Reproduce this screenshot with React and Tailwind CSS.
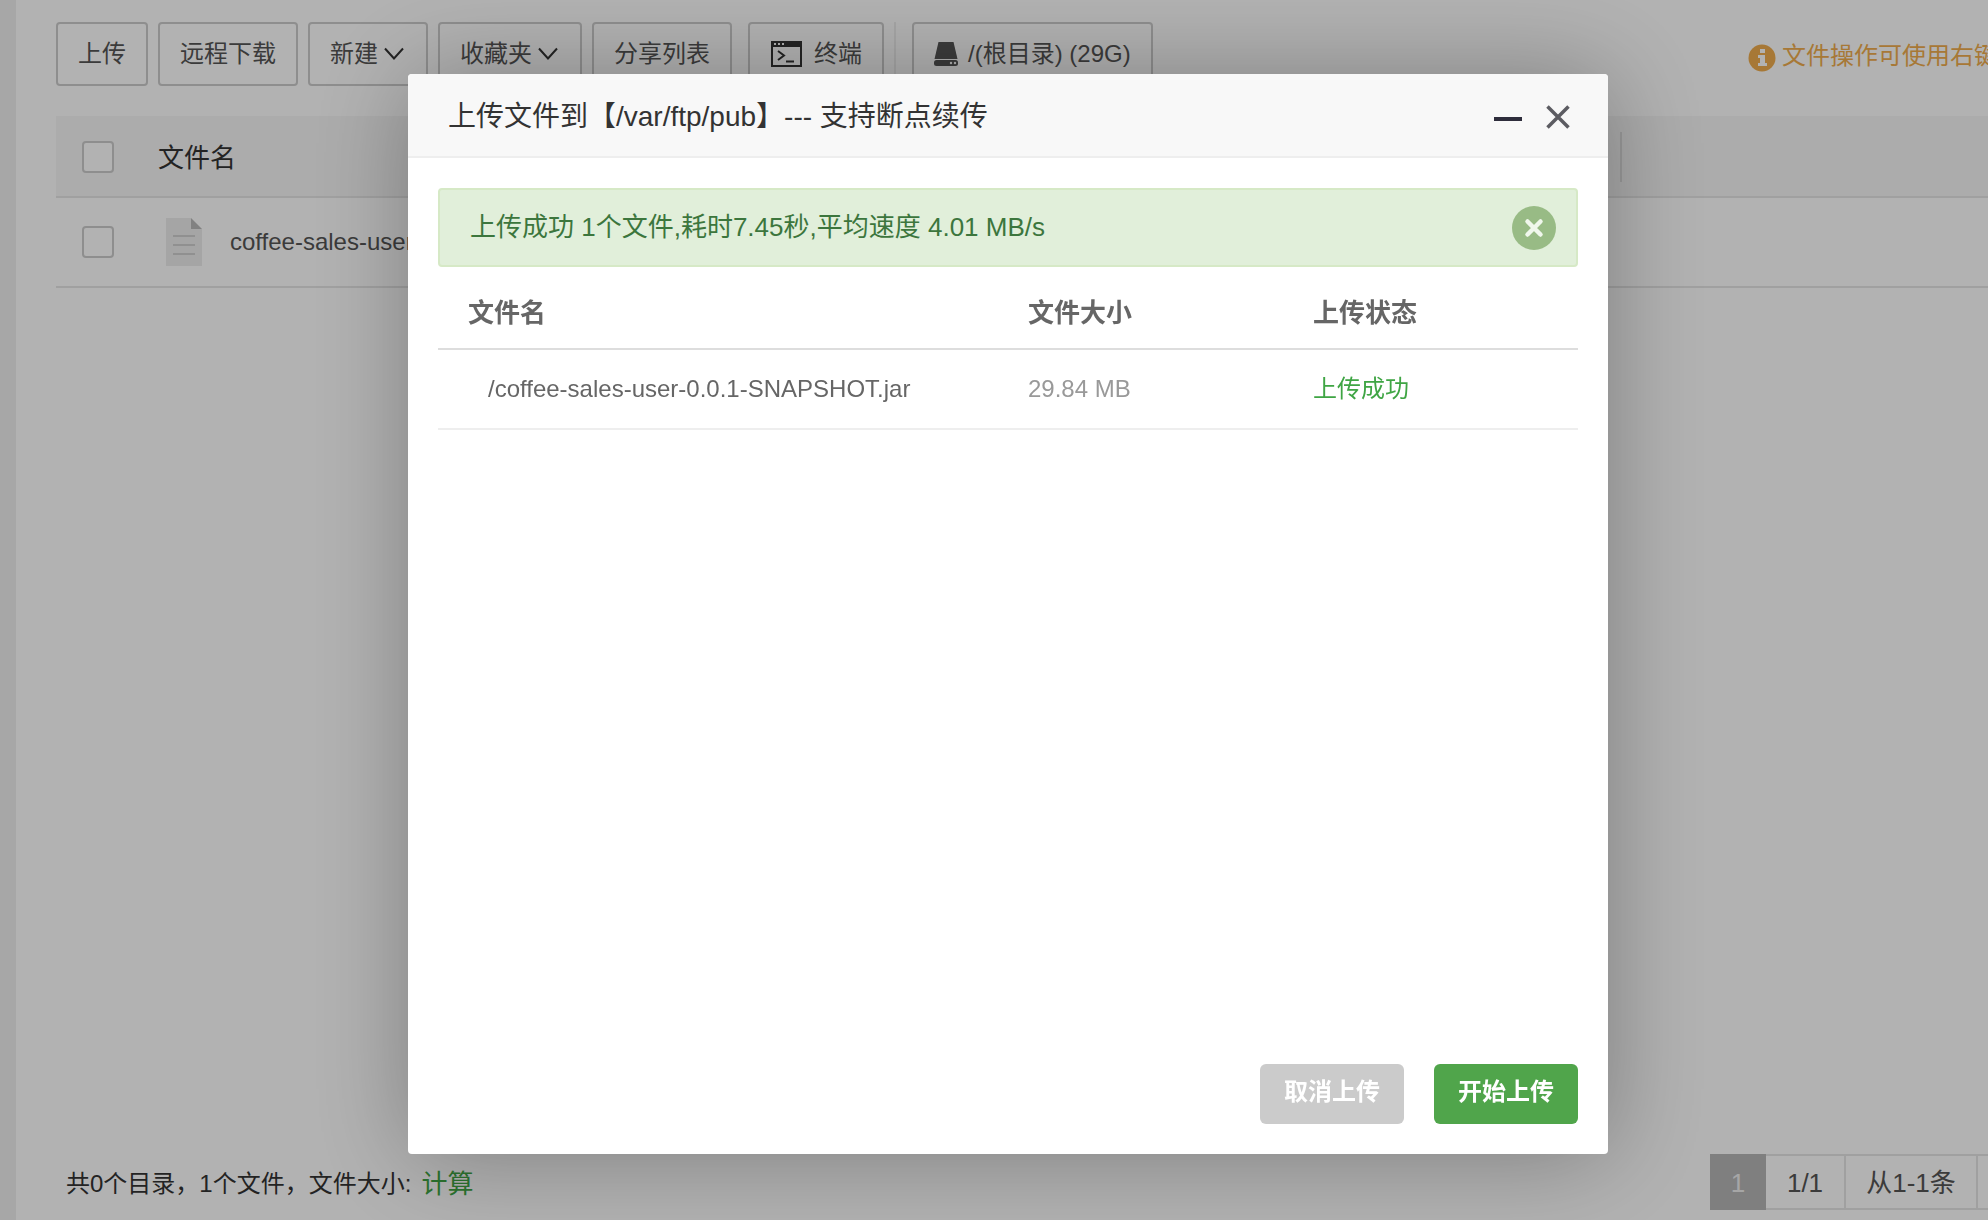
import React, { useState } from 'react';

const files = [{ name: 'coffee-sales-user-0.0.1-SNAPSHOT.jar', size: '29.84 MB', status: '上传成功' }];

const toolBtn = 'h-16 px-5 border-2 border-[#ccc] rounded bg-white text-[#555] flex items-center shrink-0 whitespace-nowrap';
const checkbox = 'appearance-none block w-8 h-8 border-2 border-[#ccc] rounded bg-white';

function Chevron() {
  return (
    <svg className="w-5 h-5 ml-1.5 mr-0.5" viewBox="0 0 20 20" fill="none" stroke="#333" strokeWidth="2">
      <path d="M1 4.500l9 10 9-10" />
    </svg>
  );
}

function TerminalIcon() {
  return (
    <svg className="w-8 h-7 mr-3" viewBox="0 0 32 28" fill="none" stroke="#333" strokeWidth="2">
      <rect x="2" y="2" width="29" height="24" />
      <path d="M1 1h31v6H1z" fill="#333" stroke="none" />
      <path d="M4 4h2M8 4h2M12 4h2" stroke="#fff" />
      <path d="M8 11l6 4.500-6 4.500M16 21.500h8" />
    </svg>
  );
}

function DiskIcon() {
  return (
    <svg className="w-6 h-6 mr-2.5" viewBox="0 0 24 24" fill="#555">
      <path d="M4.500 0h15l4 17H.5z" />
      <rect y="18" width="24" height="6" rx="2.500" />
      <circle cx="17" cy="21" r="1.200" fill="#fff" />
      <circle cx="21" cy="21" r="1.200" fill="#fff" />
    </svg>
  );
}

function FileIcon() {
  return (
    <svg className="w-9 h-12" viewBox="0 0 36 48">
      <path d="M0 0h25v11h11v37H0z" fill="#ececec" />
      <path d="M25 0l11 11H25z" fill="#b9b9b9" />
      <path d="M7 18h22M7 27h22M7 36h22" stroke="#cfcfcf" strokeWidth="2" />
    </svg>
  );
}

function InfoIcon() {
  return (
    <svg className="w-7 h-7 mt-1 mr-1.5 shrink-0" viewBox="0 0 28 28">
      <circle cx="14" cy="14" r="13.500" fill="#f0ad4e" />
      <path d="M12 5h5v4h-5zM10 11h7v8h2v3h-9v-3h2v-5h-2z" fill="#fff" />
    </svg>
  );
}

function Toolbar() {
  return (
    <div className="flex items-center pt-[22px] text-[24px]">
      <div className="flex gap-2.5">
        <button className={toolBtn}>上传</button>
        <button className={toolBtn}>远程下载</button>
        <button className={toolBtn}>新建<Chevron /></button>
        <button className={toolBtn}>收藏夹<Chevron /></button>
        <button className={toolBtn}>分享列表</button>
      </div>
      <div className="flex items-center ml-4 pr-2.5 mr-4 border-r-2 border-[#eee]">
        <button className={toolBtn}><TerminalIcon />终端</button>
      </div>
      <button className={toolBtn}><DiskIcon />/(根目录) (29G)</button>
      <div className="flex items-center ml-auto w-[240px] shrink-0 pt-1 whitespace-nowrap text-[#f0ad4e]">
        <InfoIcon />
        <span>文件操作可使用右键</span>
      </div>
    </div>
  );
}

function FileTable() {
  return (
    <table className="w-full mt-[30px] table-fixed border-collapse text-left">
      <thead>
        <tr className="h-[81px] bg-[#f6f6f6] border-b-2 border-[#e6e6e6] text-[26px] text-[#333]">
          <th className="w-[102px] pl-[26px] pt-0.5">
            <input type="checkbox" aria-label="全选" className={checkbox} />
          </th>
          <th className="pt-1 font-normal">文件名</th>
          <th className="w-[368px] pt-0.5">
            <div className="h-[50px] border-l-2 border-[#ddd]" />
          </th>
        </tr>
      </thead>
      <tbody>
        {files.map((f) => (
          <tr key={f.name} className="h-[90px] border-b-2 border-[#e6e6e6] text-[24px] text-[#555]">
            <td className="pl-[26px]">
              <input type="checkbox" aria-label={f.name} className={checkbox} />
            </td>
            <td>
              <div className="flex items-center pl-2 gap-7">
                <FileIcon />
                <span>{f.name}</span>
              </div>
            </td>
            <td />
          </tr>
        ))}
      </tbody>
    </table>
  );
}

function Footer() {
  return (
    <footer className="flex items-center justify-between mt-auto mb-2.5 pl-2.5 text-[24px] text-[#333]">
      <div className="flex items-center pt-1">
        共0个目录，1个文件，文件大小:
        <a href="#" className="ml-2.5 text-[26px] text-[#3fa544]">计算</a>
      </div>
      <div className="flex h-14 text-[26px] text-[#555]">
        <span className="w-14 pt-0.5 flex items-center justify-center bg-[#b6b6b6] text-[#eee]">1</span>
        <span className="w-20 pt-0.5 flex items-center justify-center border-2 border-l-0 border-[#e6e6e6]">1/1</span>
        <span className="w-[132px] pt-0.5 flex items-center justify-center border-2 border-l-0 border-[#e6e6e6]">从1-1条</span>
        <span className="w-2.5 border-y-2 border-[#e6e6e6]" />
      </div>
    </footer>
  );
}

function UploadDialog({ onClose }) {
  const [showTip, setShowTip] = useState(true);

  return (
    <div role="dialog" aria-label="上传文件" className="w-[1200px] h-[1080px] flex flex-col rounded bg-white shadow-[2px_2px_100px_rgba(0,0,0,0.3)]">
      {/* Title bar */}
      <div className="h-[84px] shrink-0 flex items-center px-[38px] pt-1 rounded-t bg-[#f8f8f8] border-b-2 border-[#eee]">
        <h2 className="pl-0.5 text-[28px] text-[#333]">上传文件到【/var/ftp/pub】--- 支持断点续传</h2>
        <div className="ml-auto flex items-center gap-6">
          <button aria-label="最小化" className="w-7 h-6 flex items-center">
            <span className="w-7 h-1 mt-1 bg-[#2e2d3c]" />
          </button>
          <button aria-label="关闭" onClick={onClose}>
            <svg className="w-6 h-6" viewBox="0 0 24 24" stroke="#5c5c62" strokeWidth="3.500">
              <path d="M1.500 1.500l21 21M22.500 1.500l-21 21" />
            </svg>
          </button>
        </div>
      </div>

      {/* Body */}
      <div className="flex-1 px-[30px] pt-[30px]">
        {showTip && (
          <div className="h-[79px] flex items-center justify-between pl-[30px] pr-5 border-2 border-[#d6e9c6] rounded bg-[#e1efda] text-[26px] text-[#3c763d]">
            <span>上传成功 1个文件,耗时7.45秒,平均速度 4.01 MB/s</span>
            <button aria-label="关闭提示" onClick={() => setShowTip(false)}>
              <svg className="w-11 h-11" viewBox="0 0 44 44">
                <circle cx="22" cy="22" r="22" fill="#98bb85" />
                <path d="M15.500 15.500l13 13M28.500 15.500l-13 13" stroke="#f0f7ec" strokeWidth="4.500" strokeLinecap="round" />
              </svg>
            </button>
          </div>
        )}
        <table className="w-full table-fixed border-collapse text-left">
          <thead>
            <tr className="h-[82px] border-b-2 border-[#ddd] text-[26px] text-[#666]">
              <th className="w-[560px] pl-[30px] pt-3">文件名</th>
              <th className="w-[285px] pl-[30px] pt-3">文件大小</th>
              <th className="pl-[30px] pt-3">上传状态</th>
            </tr>
          </thead>
          <tbody>
            {files.map((f) => (
              <tr key={f.name} className="h-20 border-b-2 border-[#eee] text-[24px] text-[#666]">
                <td className="pl-[50px]">/{f.name}</td>
                <td className="pl-[30px] text-[#999]">{f.size}</td>
                <td className="pl-[30px] text-[#3fa544]">{f.status}</td>
              </tr>
            ))}
          </tbody>
        </table>
      </div>

      {/* Actions */}
      <div className="flex justify-end gap-[30px] p-[30px] text-[24px] font-bold text-white">
        <button className="w-36 h-[60px] pb-1 rounded-md bg-[#cbcbcb]">取消上传</button>
        <button className="w-36 h-[60px] pb-1 rounded-md bg-[#50a54b]">开始上传</button>
      </div>
    </div>
  );
}

function App() {
  const [open, setOpen] = useState(true);

  return (
    <div className="min-h-screen flex overflow-hidden bg-[#f0f0f0] font-['Liberation_Sans','Noto_Sans_CJK_SC',sans-serif]">
      <main className="flex-1 min-w-0 flex flex-col ml-4 pl-10 bg-white">
        <Toolbar />
        <FileTable />
        <Footer />
      </main>

      {open && (
        <div className="fixed inset-0 flex items-center justify-center pl-7 pt-2 bg-black/30">
          <UploadDialog onClose={() => setOpen(false)} />
        </div>
      )}
    </div>
  );
}

export default App;
